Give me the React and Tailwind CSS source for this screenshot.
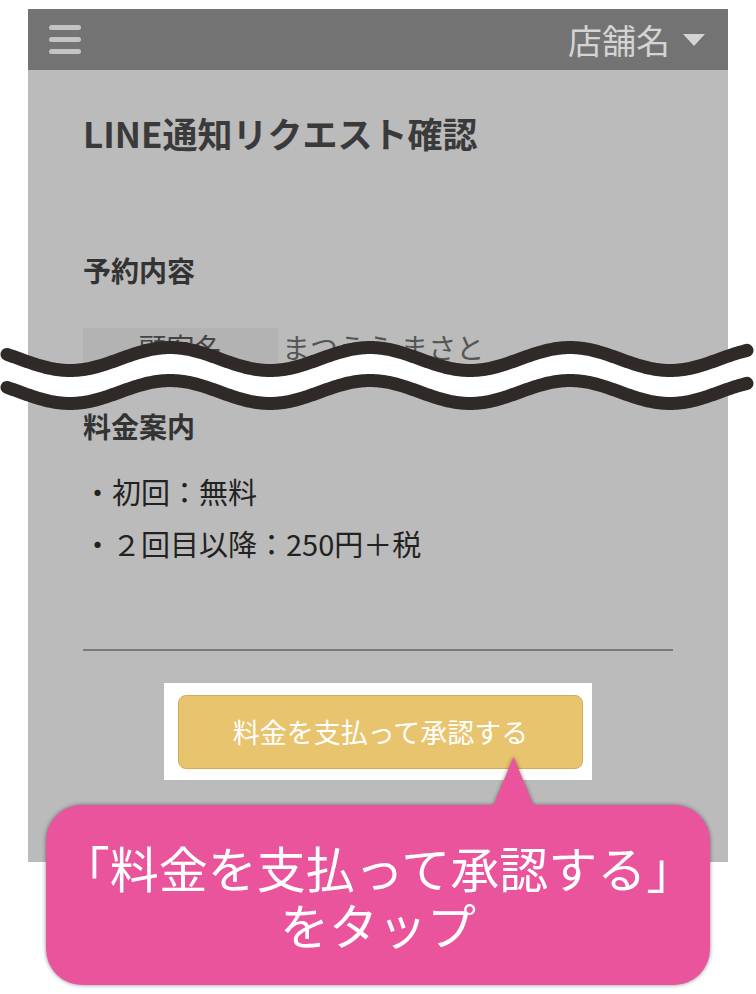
import React from "react";

const FONT = { fontFamily: '"Noto Sans CJK JP", "Noto Sans", sans-serif' };

function wavePoints(offset) {
  const pts = [];
  for (let x = 7; x <= 748; x += 2) {
    const y = 359 + offset + 11.5 * Math.sin((2 * Math.PI * (x - 20)) / 200);
    pts.push([x, y]);
  }
  return pts;
}

const top = wavePoints(0);
const bot = wavePoints(33);
const toPath = (pts) => "M" + pts.map((p) => `${p[0]} ${p[1].toFixed(2)}`).join(" L");
const fillPath =
  toPath(top) +
  " L" +
  bot
    .slice()
    .reverse()
    .map((p) => `${p[0]} ${p[1].toFixed(2)}`)
    .join(" L") +
  " Z";

export default function App() {
  return (
    <div className="relative w-[756px] h-[994px] bg-white overflow-hidden" style={FONT}>
      <div className="ml-[28px] pt-[9px] w-[700px]">
        <div className="w-[700px] h-[853px] bg-[#bbbbbb] flex flex-col">
          {/* header */}
          <div className="h-[61px] bg-[#737373] flex items-center justify-between pl-[21px] pr-[23px] shrink-0">
            <div className="flex flex-col gap-[7px]">
              <div className="w-[32px] h-[5px] rounded-full bg-[#c4c4c4]" />
              <div className="w-[32px] h-[5px] rounded-full bg-[#c4c4c4]" />
              <div className="w-[32px] h-[5px] rounded-full bg-[#c4c4c4]" />
            </div>
            <div className="flex items-center">
              <span className="text-[34px] leading-none text-[#d4d4d4]">店舗名</span>
              <svg width="22" height="12" viewBox="0 0 22 12" className="ml-[13px]">
                <polygon points="0,0 22,0 11,12" fill="#d4d4d4" />
              </svg>
            </div>
          </div>

          {/* content */}
          <div className="px-[55px] flex flex-col">
            <h1 className="mt-[42px] text-[35px] leading-[42px] font-bold text-[#3a3a3a]">
              LINE通知リクエスト確認
            </h1>

            <h2 className="mt-[99px] text-[28px] leading-[35px] font-bold text-[#333333]">予約内容</h2>

            <div className="mt-[40px] flex h-[60px]">
              <div className="w-[195px] h-full bg-[#b3b3b3] flex justify-center text-[28px] leading-[38px] text-[#444444]">
                顧客名
              </div>
              <div className="pl-[4px] text-[28px] leading-[38px] text-[#555555]">まつうら まさと</div>
            </div>

            <h2 className="mt-[21px] text-[28px] leading-[35px] font-bold text-[#333333]">料金案内</h2>

            <ul className="mt-[21px] text-[29px] leading-[52px] text-[#222222]">
              <li>・初回：無料</li>
              <li>・２回目以降：250円＋税</li>
            </ul>

            <div className="mt-[80px] h-[2px] bg-[#7a7a7a]" />

            <div className="mt-[32px] self-center bg-white pl-[14px] pr-[9px] pt-[12px] pb-[11px]">
              <div className="w-[405px] h-[74px] rounded-[8px] bg-[#e9c46f] border-[1.5px] border-[#d3aa58] flex items-center justify-center text-[27px] text-white">
                料金を支払って承認する
              </div>
            </div>
          </div>
        </div>
      </div>

      {/* wave break */}
      <svg
        className="absolute left-0 top-0 pointer-events-none"
        width="756"
        height="994"
        viewBox="0 0 756 994"
      >
        <path d={fillPath} fill="#ffffff" />
        <path d={toPath(top)} fill="none" stroke="#2f2a27" strokeWidth="13" strokeLinecap="round" />
        <path d={toPath(bot)} fill="none" stroke="#2f2a27" strokeWidth="13" strokeLinecap="round" />
      </svg>

      {/* callout */}
      <div className="absolute left-[46px] top-[757px] w-[664px] h-[228px] drop-shadow-[0_0_2px_rgba(0,0,0,0.45)]">
        <svg className="absolute left-[446px] top-0" width="43" height="52" viewBox="0 0 43 52">
          <polygon points="21.5,0 0,52 43,52" fill="#ea549c" />
        </svg>
        <div className="absolute left-0 top-[48px] w-[664px] h-[180px] rounded-[36px] bg-[#ea549c] flex flex-col items-center justify-center text-white text-[49px] leading-[57px]">
          <div className="whitespace-nowrap">「料金を支払って承認する」</div>
          <div className="whitespace-nowrap">をタップ</div>
        </div>
      </div>
    </div>
  );
}
